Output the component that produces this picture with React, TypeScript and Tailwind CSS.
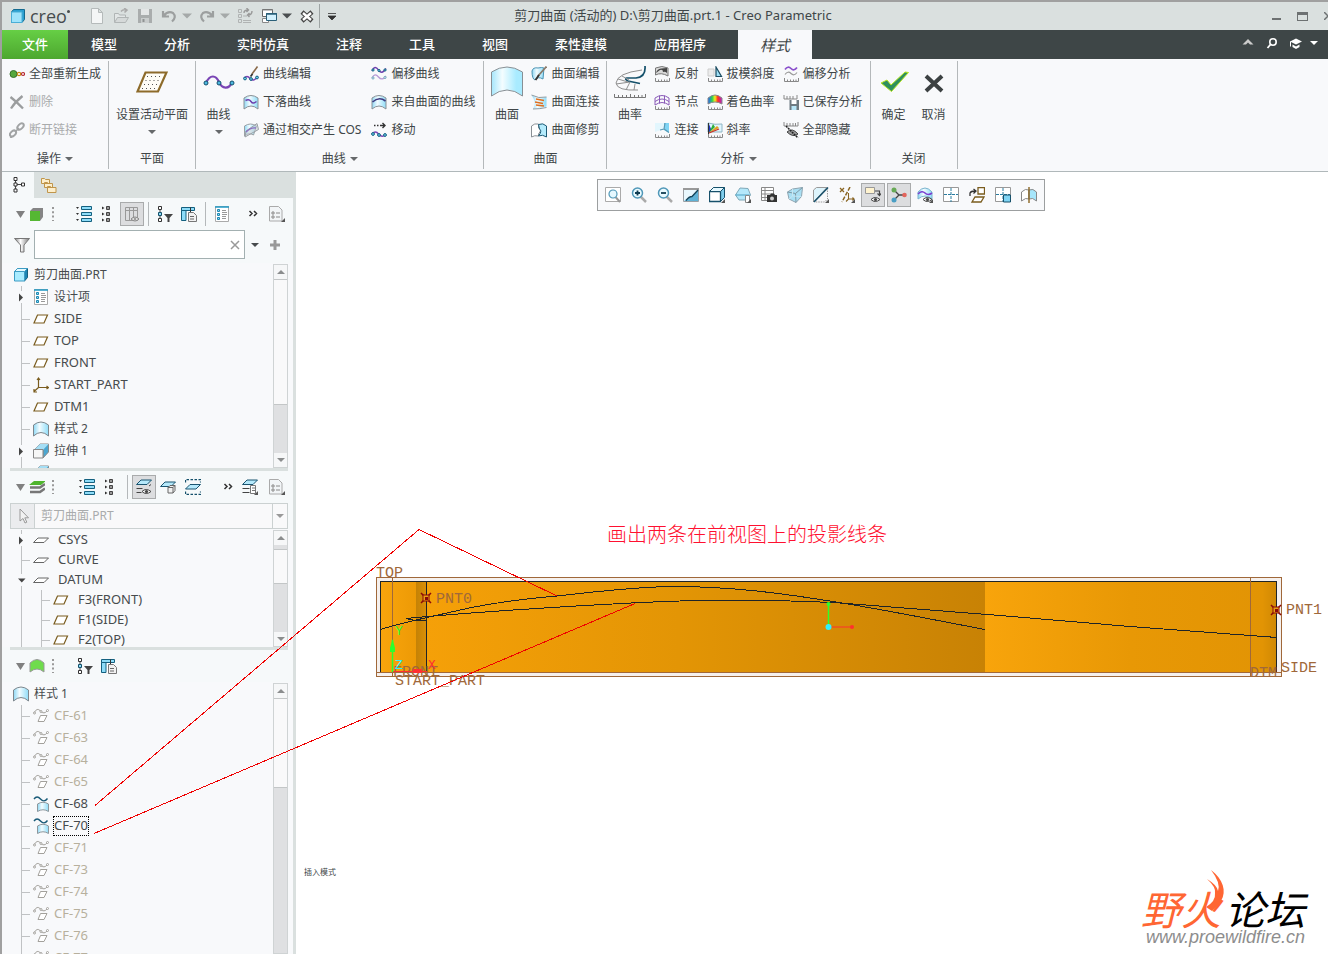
import type { ReactNode } from 'react';
import { clsx } from 'clsx';

/* ----- icons (16x16 unless noted) ----- */

const ruler = <path d="M1.5 12v3.5h14V12M4.5 13.5v2M7.5 13.5v2M10.5 13.5v2M13 13.5v2" fill="none" stroke="#888" />;
const wave = 'M1 5C3 .5 5 .5 7.500 4S12 7 15 2.5';
const sheetArc = 'M1 4Q8-1 15 4V15Q8 9 1 15Z';
const magnifier = (
  <>
    <path d="M9.5 9.5l5.500 5.500" stroke="#aaa" strokeWidth="2.5" />
    <circle cx="6.5" cy="6" r="5" fill="#eafaff" stroke="#4f97b8" strokeWidth="1.5" />
  </>
);
const eye = (
  <>
    <path d="M6 12.5q4-4 9 0q-5 4-9 0Z" fill="#fff" stroke="#444" />
    <circle cx="10.5" cy="12.5" r="1.6" fill="#444" />
  </>
);
const corner = <path d="M16 12v4h-4z" fill="#555" />;

const ICONS = {
  creo: (
    <>
      <path d="M1.5 4l2-2.500h11v10l-2.500 3h-10.500z" fill="#2b9fd0" stroke="#156a8f" />
      <path d="M1.5 4h10.500v10.500h-10.500z" fill="#9fe3fb" stroke="#4aaed6" />
    </>
  ),
  newFile: <path d="M2.5.5h7l4 4v11h-11zM9.5.5v4h4" fill="#f4f6f6" stroke="#b5baba" />,
  open: (
    <>
      <path d="M1.5 14V5.500h4l1 1.500h6v2" fill="#e2e6e6" stroke="#b0b5b5" />
      <path d="M1.5 14.500l3-5h11l-3 5z" fill="#d5d9d9" stroke="#b0b5b5" />
      <path d="M8 3.5q2-2.500 5-1.500M11 0l3 2-2.500 2.500" fill="none" stroke="#aaa" strokeWidth="1.5" />
    </>
  ),
  save: (
    <>
      <path d="M1 1h14v14H1z" fill="#a9adad" />
      <path d="M4 1h8v6H4z" fill="#e3e6e6" />
      <path d="M4 10h8v5H4z" fill="#c9cdcd" />
      <path d="M5.5 11h2v3h-2z" fill="#8f9393" />
    </>
  ),
  undo: <path d="M2 3v5.500h6M2.500 8Q7 2.500 12 5q4 4-1 8.500" fill="none" stroke="#9c9f9f" strokeWidth="2.2" />,
  redo: <path d="M14 3v5.500H8M13.500 8Q9 2.500 4 5q-4 4 1 8.500" fill="none" stroke="#9c9f9f" strokeWidth="2.2" />,
  regenList: (
    <>
      <path d="M1.5 1.500h3v3h-3zM1.500 6.500h3v3h-3zM1.500 11.500h3v3h-3z" fill="none" stroke="#b0b3b3" />
      <path d="M6 8h4M6 12.500h8M6 14.500h8" stroke="#b0b3b3" />
      <path d="M7 5q0-3 4-3M9.500 0l2 2-2 2M15 3q0 4-4 4M12.500 5l-2 2 2 2" fill="none" stroke="#999" strokeWidth="1.4" />
    </>
  ),
  windows: (
    <>
      <path d="M1.5 1.500h10v7h-10z" fill="#fff" stroke="#666" />
      <path d="M1.5 10.500h6v4h-6zM1 2h11" fill="#fff" stroke="#888" />
      <path d="M5.5 5.500h10v7h-10z" fill="#d4f1fd" stroke="#2a5f78" />
      <path d="M5 6h11" stroke="#2a5f78" strokeWidth="1.5" />
    </>
  ),
  closeWin: (
    <>
      <path d="M3 4l10 9M13 4L3 13" stroke="#444" strokeWidth="4.5" />
      <path d="M4 5l8 7M12 5l-8 7" stroke="#fff" strokeWidth="2.4" />
    </>
  ),
  quickMenu: <path d="M4 5.500h8M4 8h8l-4 4z" fill="#333" stroke="#333" strokeWidth=".8" />,
  regen: (
    <>
      <circle cx="4.5" cy="8" r="3.5" fill="#55a83c" stroke="#35702a" />
      <circle cx="10" cy="8" r="1.7" fill="#fff" stroke="#c68a12" strokeWidth="1.2" />
      <circle cx="14" cy="8" r="1.5" fill="#fff" stroke="#b4242f" strokeWidth="1.2" />
    </>
  ),
  remove: <path d="M1.5 3Q8 8 14 14.500M13.500 2Q6 8 2 14.500" fill="none" stroke="#9b9d9e" strokeWidth="2.3" />,
  unlink: (
    <>
      <ellipse cx="11.5" cy="4.5" rx="3.8" ry="2.3" transform="rotate(-45 11.5 4.5)" fill="none" stroke="#a2a4a5" strokeWidth="2" />
      <ellipse cx="4" cy="11.5" rx="3.5" ry="2.3" transform="rotate(-45 4 11.5)" fill="none" stroke="#a2a4a5" strokeWidth="2" />
      <path d="M10 6l-4 4M3 15.500l-2 .5" stroke="#a2a4a5" strokeWidth="1.5" />
    </>
  ),
  curveEdit: (
    <>
      <path d="M1 12.500q3-4 6 0t8-2" fill="none" stroke="#7a45b5" strokeWidth="1.5" />
      <path d="M9 8L14.500 .5" stroke="#8a6a4a" strokeWidth="1.6" />
      <path d="M7.5 10.500l2-2.500" stroke="#333" strokeWidth="1.8" />
      <circle cx="2" cy="12.500" r="1.400" fill="#6fd0f2" stroke="#14607f" />
      <circle cx="8" cy="13" r="1.400" fill="#6fd0f2" stroke="#14607f" />
      <circle cx="14" cy="11.500" r="1.400" fill="#6fd0f2" stroke="#14607f" />
    </>
  ),
  dropCurve: (
    <>
      <path d={sheetArc} fill="url(#sky)" stroke="#8a9095" />
      <path d="M2.5 6.500q3.500-2 5.500 1t5.500 0" fill="none" stroke="#6c3fae" strokeWidth="1.5" />
    </>
  ),
  intersect: (
    <>
      <path d="M1.5 4q6-4 12 0l-3 9q-5-3-9 1z" fill="url(#sky)" stroke="#9aa0a5" />
      <path d="M2 15L15.500 7.500 14 1.500 3 9z" fill="#c7ccd0" fillOpacity=".5" stroke="#9aa0a5" />
      <path d="M3 10q5-5 10-4" fill="none" stroke="#8a6fc0" strokeWidth="1.3" />
    </>
  ),
  offsetCurve: (
    <>
      <path d={wave} fill="none" stroke="#6c3fae" strokeWidth="1.4" />
      <path d="M1 12C3 8 5 8 7.500 11s5 2.500 7.500-1" fill="none" stroke="#b79ad6" strokeWidth="1.3" />
      <circle cx="2" cy="4" r="1.100" fill="#6fd0f2" stroke="#14607f" />
      <circle cx="8" cy="4.500" r="1.100" fill="#6fd0f2" stroke="#14607f" />
      <circle cx="14" cy="4" r="1.100" fill="#6fd0f2" stroke="#14607f" />
      <circle cx="2" cy="12" r="1.100" fill="#d0ecf8" stroke="#7aa9bd" />
      <circle cx="14" cy="11.500" r="1.100" fill="#d0ecf8" stroke="#7aa9bd" />
    </>
  ),
  curveFromSurf: (
    <>
      <path d={sheetArc} fill="url(#sky)" stroke="#8a9095" />
      <path d="M1.5 8q6.500-6 13-1" fill="none" stroke="#3e3a80" strokeWidth="1.6" />
    </>
  ),
  move: (
    <>
      <path d="M3 3.500h1.500M6 3.500h1.500M9 3.500h5M11.500 1l2.500 2.500-2.500 2.500" fill="none" stroke="#333" strokeWidth="1.4" />
      <path d="M1 12q3.500-4 6.500 0t7.500 1" fill="none" stroke="#7a45b5" strokeWidth="1.4" />
      <circle cx="2" cy="12" r="1.400" fill="#6fd0f2" stroke="#14607f" />
      <circle cx="8" cy="13" r="1.400" fill="#6fd0f2" stroke="#14607f" />
      <circle cx="14" cy="13" r="1.400" fill="#6fd0f2" stroke="#14607f" />
    </>
  ),
  surfEdit: (
    <>
      <path d="M1 5q1-4 6-3 4-1 6 0l-1 11q-5-3-8 1-3-1-3-9z" fill="url(#sky)" stroke="#4b93b3" />
      <path d="M7 10L15.500 .5" stroke="#8a7a6a" strokeWidth="1.8" />
      <path d="M4.5 14l3.500-5" stroke="#333" strokeWidth="2" />
    </>
  ),
  surfConnect: (
    <>
      <path d="M.5 1q7 4 15 2v9.500q-7 2-13.500 2.500 4-6-1.500-14z" fill="url(#sky)" />
      <path d="M.5 1q7 4 15 2M2 15q7 0 13.500-1.500" fill="none" stroke="#909aa0" />
      <path d="M5 5l8 1.500M4 8l8 1.500M5 11l8 1" stroke="#e07020" strokeWidth="1.4" />
    </>
  ),
  surfTrim: (
    <>
      <path d="M.5 4q3-3 7-2v4q4 1 0 6v2q-4-1-7 1z" fill="#fff" stroke="#8a9095" />
      <path d="M7.5 2.500Q12 .5 15.500 4v11q-4-3-8-1 4-5 1-7z" fill="#b4ebfc" stroke="#1d5a75" />
    </>
  ),
  reflect: (
    <>
      <path d="M1.500 2Q8-1 14 2v8Q7 6 1.500 9z" fill="#d8d8d8" stroke="#777" />
      <path d="M2 7Q3 3 7 2.500L13 2v5Q11 5 9 6q0-3-3-2z" fill="#444" />
      {ruler}
    </>
  ),
  nodes: (
    <>
      <path d="M1 4q7-5 14 0M1 7.500q7-5 14 0M1 11q7-5 14 0M1 4v7M5.500 1.500v8M10.500 1.500v8M15 4v7" fill="none" stroke="#8a5bb8" />
      {ruler}
    </>
  ),
  connection: (
    <>
      <path d="M1 1h9v6l-9 3z" fill="#e2f6fd" />
      <path d="M10 1h5v10l-5-3z" fill="#7fd4f4" />
      <path d="M6 8l4-1 1-6M10 7l5 3.500" fill="none" stroke="#5a9ab5" strokeWidth="1.2" />
      {ruler}
    </>
  ),
  draft: (
    <>
      <path d="M1 3h6v7H1z" fill="#ececec" stroke="#ccc" />
      <path d="M9 1l5.500 9.500H9z" fill="#9fe0f7" stroke="#1a4a60" strokeWidth="1.2" />
      {ruler}
    </>
  ),
  shadeCurv: (
    <>
      <path d="M1 4q7-6 14 0v6Q8 6 1 10z" fill="url(#rainbow)" stroke="#888" />
      {ruler}
    </>
  ),
  slope: (
    <>
      <path d="M1 1q7 2 14 1v8H1z" fill="#dff5fd" stroke="#8fb6c6" />
      <path d="M1.5 11V1l3 7z" fill="#2038c8" />
      <path d="M2 11L6 2l2 3z" fill="#2fae3a" />
      <path d="M2 11l8-7 2 2z" fill="#e0a020" />
      <path d="M2 11l10-4" stroke="#c8302a" strokeWidth="1.3" />
      <path d="M1.5 1v11" stroke="#333" />
      {ruler}
    </>
  ),
  offsetAnalysis: (
    <>
      <path d="M2 3.500q3-4 6-1t6-1" fill="none" stroke="#8a4fcc" strokeWidth="1.7" />
      <path d="M2 8.500q3-4 6-1t6-1" fill="none" stroke="#9a9a9a" strokeWidth="1.2" />
      {ruler}
    </>
  ),
  savedAnalysis: (
    <>
      <path d="M1 1v4h13V1M4 2v3M7 2v3M10 2v3" fill="none" stroke="#888" />
      <path d="M6.5 6h9.500v10H6.500z" fill="#6f7b82" />
      <path d="M8.5 6h5v4h-5z" fill="#fff" />
      <path d="M8.5 12h5v4h-5z" fill="#b9e7f8" />
    </>
  ),
  hideAll: (
    <>
      <path d="M1 0v4h14V0M4 1v3M7 1v3M10 1v3M12.500 1v3" fill="none" stroke="#888" />
      <path d="M4 10q5-5 11 2-5 4-11-2z" fill="#999" stroke="#444" />
      <path d="M3 4l12 12" stroke="#222" strokeWidth="1.5" strokeDasharray="2 .8" />
    </>
  ),
  modelTree: (
    <>
      <path d="M3.5 4v8M4 7.500h7" stroke="#444" />
      <path d="M2 .5h3v3H2zM2 6h3v3H2zM2 12h3v3H2zM9.500 6h3v3h-3z" fill="#fff" stroke="#333" />
    </>
  ),
  folders: (
    <path d="M.5 1.500h3l1 1h4v4h-8zM3.500 5.500h3l1 1h4v4h-8zM6.500 9.500h3l1 1h4.500v5H6.500z" fill="#fdeecb" stroke="#c0954a" />
  ),
  triangle: <path d="M4 5h9L8.500 12z" fill="#808080" />,
  greenCube: (
    <>
      <path d="M1 5l3-3h10v9l-3 4z" fill="#858585" />
      <path d="M1 5h10v10H1z" fill="#55b733" />
    </>
  ),
  greenLayers: (
    <>
      <path d="M5 2h12l-5 4H0z" fill="#4fb52e" />
      <path d="M1 8.500h10l5-3.500M1 13h10l5-3.500" fill="none" stroke="#777" strokeWidth="2.5" />
    </>
  ),
  greenSurf: <path d="M1 5q7-7 14 0v9Q8 8 1 14z" fill="#6fdc4c" stroke="#999" />,
  dots: <path d="M3 1v14" stroke="#999" strokeWidth="2" strokeDasharray="2 2.300" />,
  expandAll: (
    <>
      <path d="M0 1h3L1.500 3zM0 7h3L1.500 9zM0 13h3L1.500 15z" fill="#333" />
      <path d="M5.5 .5h10v3h-10zM5.500 6.500h10v3h-10zM5.500 12.500h10v3h-10z" fill="#8ddcf8" stroke="#14607f" />
    </>
  ),
  collapseAll: (
    <>
      <path d="M4 .5v3L6.500 2zM4 6.500v3L6.500 8zM4 12.500v3l2.500-1.500z" fill="#333" />
      <path d="M8.5 .5h3v3h-3zM8.500 6.500h3v3h-3zM8.500 12.500h3v3h-3z" fill="#999" stroke="#444" />
    </>
  ),
  columnsEye: (
    <>
      <path d="M1.5 1.500h12v13h-12zM1.500 4.500h12M5.500 1.500v13M9.500 1.500v13" fill="none" stroke="#999" />
      <path d="M7 13q4-4 8 0-4 4-8 0z" fill="#ddd" stroke="#888" />
      <circle cx="11" cy="13" r="1" fill="#888" />
    </>
  ),
  treeFilter: (
    <>
      <path d="M3 3v10" stroke="#444" />
      <path d="M1.5 .5h3v3h-3zM1.500 12.500h3v3h-3z" fill="#fff" stroke="#333" />
      <path d="M1.5 6.500h3v3h-3z" fill="#8ddcf8" stroke="#14506b" />
      <path d="M7 8h9l-3.500 4v4h-2v-4z" fill="#444" />
    </>
  ),
  treeColumns: (
    <>
      <path d="M1 1.500h13v13H1z" fill="#fff" />
      <path d="M.5 1.500h13v3H.5zM.5 4.500h4.500v10H.5z" fill="#8ddcf8" stroke="#14607f" />
      <path d="M9.5 1.500V7" stroke="#333" />
      <path d="M7.5 6.500h5l3 3v6h-8z" fill="#f2f2f2" stroke="#777" />
      <path d="M9 10.500h4M9 13h4" stroke="#666" />
    </>
  ),
  sheet: (
    <>
      <path d="M1.5 .5h13v15h-13z" fill="#fff" stroke="#aaa" />
      <path d="M1 1h14" stroke="#1f9ac6" strokeWidth="1.5" />
      <path d="M3.5 3.500h2v2h-2zM3.500 7.500h2v2h-2zM3.500 11.500h2v2h-2z" fill="#8ddcf8" stroke="#1c87b0" />
      <path d="M8 4.500h4M8 6.500h5M8 8.500h5M8 10.500h4M8 12.500h4" stroke="#999" />
    </>
  ),
  more: <path d="M3.5 5l2.500 2.500L3.500 10M8 5l2.500 2.500L8 10" fill="none" stroke="#333" strokeWidth="1.5" />,
  doc: (
    <>
      <path d="M.5 .5h9l3.500 3.500v11H.5z" fill="#f2f5f7" stroke="#aaa" />
      <path d="M3 6h2v2H3zM3 10h2v2H3z" fill="#fff" stroke="#888" />
      <path d="M7 7h4M7 11h4" stroke="#888" />
      {corner}
    </>
  ),
  funnel: <path d="M.5 1.500h15L10 8v7H6.500V8z" fill="url(#steel)" stroke="#777" />,
  part: (
    <>
      <path d="M1.5 4.500l3-3h10v9l-3 3.500z" fill="#1e86b4" stroke="#15607f" />
      <path d="M1.5 4.500h10V14h-10z" fill="#a9ecff" stroke="#3d9cc4" />
      <path d="M1.5 4.500l3-3h10l-3 3z" fill="#e5faff" stroke="#3d9cc4" />
    </>
  ),
  plane: <path d="M4.5 4h10L11 12H1z" fill="#fff" stroke="#7a5c1e" strokeWidth="1.2" />,
  csys: <path d="M5.5 1v9.500h10M5.500 10.500l-4.500 4M4 3l1.500-2L7 3M13.500 9l2 1.500-2 1.500M1 12v3h3" fill="none" stroke="#7a5c1e" strokeWidth="1.2" />,
  style: <path d="M.5 4Q8-2 15.500 4v11Q8 8 .5 15z" fill="url(#sky)" stroke="#7d868c" />,
  extrude: (
    <>
      <path d="M1 7L7 1h8.500v8L10 15V7z" fill="#4ba6d0" stroke="#8a8a8a" />
      <path d="M1 7l6-6h8.500L10 7z" fill="#a5def5" />
      <path d="M.5 6.500H10V15H.5z" fill="#f6f6f6" stroke="#888" />
    </>
  ),
  layer: <path d="M5 6h10.500L11 10.500H.5z" fill="#fff" stroke="#666" />,
  layerEye: (
    <>
      <path d="M5 1h10.500L11 5.500H.5z" fill="#b5e9fb" stroke="#1b5470" />
      <path d="M.5 9.500h6M.5 13.500h5M13 7l2-1.500" stroke="#444" />
      {eye}
    </>
  ),
  layerCube: (
    <>
      <path d="M5 3h10.500L11 7.500H.5z" fill="#b5e9fb" stroke="#1b5470" />
      <path d="M8 8.500l2-2h5v5l-2 2.500H8zM8 8.500h5V14M13 8.500l2-2" fill="#f1f1f1" stroke="#666" />
    </>
  ),
  layerFrame: (
    <>
      <path d="M.5 3.500v-3h15v3M.5 12.500v3h15v-3" fill="none" stroke="#14506b" strokeDasharray="2.5 1.500" strokeWidth="1.3" />
      <path d="M5 5.500h10.500L11 10H.5z" fill="#b5e9fb" stroke="#1b5470" />
    </>
  ),
  layerDoc: (
    <>
      <path d="M5 1h10.500L11 5.500H.5z" fill="#b5e9fb" stroke="#1b5470" />
      <path d="M.5 9.500h7M.5 13.500h7" stroke="#444" />
      <path d="M8.5 6.500h5v8h-5zM10 9h3M10 11.500h3" fill="#fff" stroke="#777" />
      {corner}
    </>
  ),
  cursor: <path d="M5 1v12l3-2.500 2 4.500 1.800-.8-2-4.400h3.700z" fill="#f2f2f2" stroke="#999" />,
  cfOff: (
    <>
      <path d="M1 5Q4-1 7.500 3t7-.5" fill="none" stroke="#a3a19c" />
      <path d="M7.5 7.500h6.500L11 13.500H5z" fill="#fff" stroke="#a3a19c" />
      <circle cx="1.5" cy="5" r="1" fill="#fff" stroke="#a3a19c" />
      <circle cx="8" cy="3.500" r="1" fill="#fff" stroke="#a3a19c" />
      <circle cx="14.500" cy="2.500" r="1" fill="#fff" stroke="#a3a19c" />
    </>
  ),
  cfOn: (
    <>
      <path d="M1 3Q4-1 7.500 3t7-.5" fill="none" stroke="#185a78" strokeWidth="1.4" />
      <path d="M4.5 8q5.500-3.500 11 0v7.500q-5.500-3.500-11 0z" fill="url(#sky)" stroke="#8d969c" />
    </>
  ),
  refit: (
    <>
      <path d="M.5 .5h15v14H.5z" fill="#fff" stroke="#aaa" />
      <path d="M10.5 10l4.500 5" stroke="#999" strokeWidth="2" />
      <circle cx="8" cy="7" r="4" fill="#e5f8ff" stroke="#4f97b8" strokeWidth="1.2" />
    </>
  ),
  zoomIn: (
    <>
      {magnifier}
      <path d="M4 6h5M6.500 3.500v5" stroke="#0f3c52" strokeWidth="1.8" />
    </>
  ),
  zoomOut: (
    <>
      {magnifier}
      <path d="M4 6h5" stroke="#0f3c52" strokeWidth="1.8" />
    </>
  ),
  repaint: (
    <>
      <path d="M.5 1.500h15v13H.5z" fill="#e9f8fe" stroke="#9aa0a5" />
      <path d="M0 2h16" stroke="#999" strokeWidth="2" />
      <path d="M1 14l8-5 6-6v11z" fill="#5fb2d6" />
      <path d="M3 13.500q3-4 6-4l6-6.500" fill="none" stroke="#14445a" strokeWidth="1.3" />
    </>
  ),
  shading: (
    <>
      <path d="M.5 4.500l4-4h11v10l-4 4z" fill="#7fcdec" stroke="#17506b" />
      <path d="M.5 4.500h11v10H.5z" fill="#fff" stroke="#17506b" strokeWidth="1.3" />
      <path d="M.5 4.500l4-4h11l-4 4z" fill="#e6f9ff" stroke="#17506b" />
      {corner}
    </>
  ),
  orient: (
    <>
      <path d="M.5 8L5 1l8 .5L15.500 8 12 13H4z" fill="#b4e8fa" stroke="#7fa8b8" />
      <path d="M.5 8h14" stroke="#4b9fc2" />
      <path d="M10.5 8.500h4v7h-4z" fill="#fff" stroke="#888" />
      {corner}
    </>
  ),
  viewMgr: (
    <>
      <path d="M.5 .5h12v13H.5zM.5 3.500h12M.5 7h12M.5 10.500h12M4 .5v13" fill="#fff" stroke="#888" />
      <path d="M6 8h3l1-1.500h3L14 8h2v7H6z" fill="#333" />
      <circle cx="11" cy="11.500" r="2" fill="#ccc" />
    </>
  ),
  perspective: (
    <>
      <path d="M.5 5l5-3 10-1.500-1 9L9 15.500 2 12z" fill="#a9dff3" stroke="#8ea4b0" />
      <path d="M.5 5l8 1.500 7-6M8.500 6.500l.5 9" fill="none" stroke="#7e98a4" />
      <path d="M5.5 2v7l9 .5M5.500 9L2 12" fill="none" stroke="#c7e6f2" />
    </>
  ),
  section: (
    <>
      <path d="M.5 15V3l3-2.500H14z" fill="#ddf4fc" stroke="#999" />
      <path d="M14.5 1v11l-3 3H2" fill="none" stroke="#999" strokeDasharray="1.5 1" />
      <path d="M1 15L15 .5" stroke="#17506b" strokeWidth="1.5" />
      {corner}
    </>
  ),
  datums: (
    <>
      <path d="M1 1l4 4M5 1L1 5" stroke="#8a6522" strokeWidth="1.3" />
      <path d="M11 0L3 15" stroke="#8a6522" strokeWidth="1.5" strokeDasharray="4 1.500" />
      <path d="M9.5 6v6h5.500M9.500 12L7 14.500M13.500 10.500L15 12l-1.500 1.500" fill="none" stroke="#8a6522" strokeWidth="1.1" />
      {corner}
    </>
  ),
  annoEye: (
    <>
      <path d="M.5 .5h9v6h-9z" fill="#fff3cf" stroke="#999" />
      <path d="M10 4h4.500v4M12.500 6.500l2 2 1.500-2" fill="none" stroke="#444" strokeWidth="1.2" />
      {eye}
    </>
  ),
  spin: (
    <>
      <path d="M3 3l5 5h6M8 8l-5 5" fill="none" stroke="#444" strokeWidth="1.3" />
      <circle cx="3" cy="3" r="2.5" fill="#67a955" />
      <circle cx="3" cy="13" r="2.5" fill="#4a9ec4" />
      <circle cx="13.500" cy="8" r="2.3" fill="#e3655c" />
    </>
  ),
  curvDisplay: (
    <>
      <path d="M1 5q7-8 14 0v7q-7-6-14 0z" fill="url(#sky)" stroke="#7bb3cd" />
      <path d="M1 7q4-4 7-1t7 0" fill="none" stroke="#7a3fd0" strokeWidth="1.6" />
      {eye}
      {corner}
    </>
  ),
  fourViews: (
    <>
      <path d="M.5 .5h15v14H.5z" fill="#fff" stroke="#999" />
      <path d="M8 1v14M1 7.500h14" stroke="#2a7ca0" strokeDasharray="3 1" />
    </>
  ),
  planeRotate: (
    <>
      <path d="M9 .5h6.500V7H9zM6 10h9l-3 5H3z" fill="#fff" stroke="#7a5c1e" strokeWidth="1.3" />
      <path d="M1 9V6q1-2 5-2M4.500 2L7 4 4.500 6.500" fill="none" stroke="#333" strokeWidth="1.3" />
    </>
  ),
  activeView: (
    <>
      <path d="M.5 .5h15v14H.5z" fill="#fff" stroke="#999" />
      <path d="M8 1v14M1 7.500h14" stroke="#2a7ca0" strokeDasharray="3 1" />
      <path d="M8.5 8h7v7h-7z" fill="#7fd4f4" stroke="#17506b" />
    </>
  ),
  symmetry: (
    <>
      <path d="M.5 5q4-4 7.500-2v9q-3-2-7.500 2z" fill="#fff" stroke="#888" />
      <path d="M8 3q4-2 7.500 2v9q-4-4-7.500-2z" fill="#a6e6fb" stroke="#888" />
      <path d="M8 0v16" stroke="#8a6522" strokeWidth="1.4" />
    </>
  ),
  caret: <path d="M4 6h8l-4 4z" fill="currentColor" />,
};

type IconName = keyof typeof ICONS;

function Icon({ name, className = 'size-4' }: { name: IconName; className?: string }) {
  return (
    <svg viewBox="0 0 16 16" className={clsx('shrink-0', className)} aria-hidden="true">
      {ICONS[name]}
    </svg>
  );
}

/* large ribbon icons, 32x32 */
const BIG_ICONS = {
  activePlane: (
    <>
      <path d="M9.5 6.500h21L22 25.500H1.500z" fill="#fffdf6" stroke="#8d6b2a" strokeWidth="2.2" />
      <path d="M11 10.500h16M9.500 14.500h16M8 18.500h16M6 22.500h16" stroke="#555" strokeDasharray="1 3" />
    </>
  ),
  curve: (
    <>
      <path d="M3 17C7 8 13 9 16 16s10 8 13 0" fill="none" stroke="#7a45b5" strokeWidth="2.2" />
      <circle cx="3" cy="17" r="2" fill="#4db8e0" stroke="#14506b" />
      <circle cx="16" cy="17" r="2" fill="#4db8e0" stroke="#14506b" />
      <circle cx="29" cy="17" r="2" fill="#4db8e0" stroke="#14506b" />
    </>
  ),
  surface: <path d="M.5 6Q16-4 31.500 6v24Q16 18 .5 30z" fill="url(#skyBig)" stroke="#888f94" />,
  curvature: (
    <>
      <path d="M31 0q1 11-9 12H13q-3 1 1 3l12 2.500" fill="none" stroke="#14506b" strokeWidth="1.7" />
      <path d="M28 4Q3 7 2 17q1 8 22 7M8 10l7 4M4 13l10 3M2 18l14-2M12 24l4-8M20 24l1-6" fill="none" stroke="#8f8f8f" />
      <path d="M.5 28v3.500h31V28M4.500 29v2M8.500 29v2M12.500 29v2M16.500 28v3M20.500 29v2M24.500 29v2M28 29v2" fill="none" stroke="#777" />
    </>
  ),
  ok: <path d="M3 17l6-3 4 5L27 6l3.500.5-17 19z" fill="#2f8f5e" stroke="#b5e61d" />,
  cancel: <path d="M8 10l16 15M24 10L8 25" stroke="#3c4142" strokeWidth="4" />,
};

/* ----- title bar and menu tabs ----- */

function QuickButton({ icon, label, caret }: { icon: IconName; label: string; caret?: 'on' | 'off' }) {
  return (
    <button type="button" aria-label={label} className="flex items-center">
      <Icon name={icon} />
      {caret && <Icon name="caret" className={clsx('size-5', caret === 'on' ? 'text-[#4a4e50]' : 'text-[#a5a9a9]')} />}
    </button>
  );
}

function TitleBar() {
  return (
    <header className="grid h-7 shrink-0 grid-cols-[1fr_auto_1fr] items-center bg-[#dae0df] text-[#404648]">
      <div className="flex items-center pl-2">
        <Icon name="creo" />
        <span className="ml-1 flex w-11 font-['Open_Sans',sans-serif] text-lg leading-5 text-[#474c4e]">
          creo
          <span className="mt-1 size-[3px] rounded-full bg-[#474c4e]" />
        </span>
        <div className="ml-[15px] flex items-center gap-2">
          <QuickButton icon="newFile" label="新建" />
          <QuickButton icon="open" label="打开" />
          <QuickButton icon="save" label="保存" />
          <div className="flex items-center gap-0.5">
            <QuickButton icon="undo" label="撤消" caret="off" />
            <QuickButton icon="redo" label="重做" caret="off" />
            <QuickButton icon="regenList" label="重新生成" />
          </div>
          <div className="flex items-center gap-0.5">
            <QuickButton icon="windows" label="窗口" caret="on" />
            <QuickButton icon="closeWin" label="关闭窗口" />
          </div>
        </div>
        <div className="ml-1 flex h-6 items-center border-l border-[#9ea4a4] pl-1">
          <QuickButton icon="quickMenu" label="自定义快速访问工具栏" />
        </div>
      </div>
      <h1 className="pl-4 text-[13px]">剪刀曲面 (活动的) D:\剪刀曲面.prt.1 - Creo Parametric</h1>
      <div className="flex items-center justify-end gap-4 overflow-hidden">
        <button type="button" aria-label="最小化" className="h-2 w-[9px] border-b-2 border-[#6d7172]" />
        <button type="button" aria-label="最大化" className="h-[9px] w-[11px] border border-t-[3px] border-[#6d7172]" />
        <button type="button" aria-label="关闭" className="-mr-1 flex">
          <svg viewBox="0 0 8 8" className="size-2 text-[#6d7172]">
            <path d="M0 0l8 8M8 0L0 8" stroke="currentColor" strokeWidth="1.5" />
          </svg>
        </button>
      </div>
    </header>
  );
}

const MENU = ['模型', '分析', '实时仿真', '注释', '工具', '视图', '柔性建模', '应用程序'];

function MenuBar() {
  return (
    <nav className="flex h-[29px] shrink-0 bg-[#3e4647] text-[13px] font-medium text-white">
      <button type="button" className="w-[66px] bg-linear-to-b from-[#66cf45] to-[#4da72f]">
        文件
      </button>
      <div className="flex gap-px">
        {MENU.map((m) => (
          <button key={m} type="button" className="px-[23px]">
            {m}
          </button>
        ))}
      </div>
      <button type="button" className="ml-[9px] w-[74px] bg-[#f8f9fb] text-[15px] font-normal text-[#404648] italic">
        样式
      </button>
      <div className="ml-auto flex items-center gap-2 pr-1.5 pb-1">
        <button type="button" aria-label="最小化功能区">
          <svg viewBox="0 0 16 16" className="size-4">
            <path d="M2.5 9.500L8 4l5.500 5.500h-3.500L8 7.500 6 9.500z" fill="#ccc" />
          </svg>
        </button>
        <button type="button" aria-label="搜索">
          <svg viewBox="0 0 16 16" className="size-4">
            <circle cx="9" cy="7" r="3.2" fill="none" stroke="#fff" strokeWidth="1.6" />
            <path d="M6.5 9.500L3.500 13" stroke="#fff" strokeWidth="1.8" />
          </svg>
        </button>
        <button type="button" aria-label="学习" className="flex gap-0.5">
          <svg viewBox="0 0 16 16" className="size-4">
            <path d="M2 6.500l6-3 6 3-6 3zM4.500 9.500V12L8 14l3.500-2V9.500L8 11.500z" fill="#fff" />
            <path d="M2.5 6.500v5" stroke="#fff" />
          </svg>
          <Icon name="caret" />
        </button>
      </div>
    </nav>
  );
}

/* ----- ribbon ----- */

type Command = [icon: IconName, label: string, disabled?: boolean];

function CommandColumn({ items }: { items: Command[] }) {
  return (
    <div className="flex flex-col pt-px">
      {items.map(([icon, label, disabled]) => (
        <button
          key={label}
          type="button"
          disabled={disabled}
          className={clsx('flex h-7 items-center gap-1 whitespace-nowrap', disabled && 'text-[#a9abac]')}
        >
          <Icon name={icon} />
          {label}
        </button>
      ))}
    </div>
  );
}

function BigButton({
  icon,
  label,
  caret,
  className = 'w-11',
}: {
  icon: keyof typeof BIG_ICONS;
  label: string;
  caret?: boolean;
  className?: string;
}) {
  return (
    <button type="button" className={clsx('flex flex-col items-center whitespace-nowrap', className)}>
      <svg viewBox="0 0 32 32" className="mt-[7px] mb-2 size-8" aria-hidden="true">
        {BIG_ICONS[icon]}
      </svg>
      <span className="leading-[18px]">{label}</span>
      {caret && <Icon name="caret" className="size-4 text-[#66696b]" />}
    </button>
  );
}

function RibbonGroup({
  label,
  menu,
  className,
  children,
}: {
  label: string;
  menu?: boolean;
  className?: string;
  children: ReactNode;
}) {
  return (
    <section className="my-0.5 flex flex-col border-r border-[#b4b8ba]">
      <div className={clsx('-mt-0.5 flex h-[85px] shrink-0', className)}>{children}</div>
      <div className="flex flex-1 items-center justify-center pt-1">
        {label}
        {menu && <Icon name="caret" className="-mr-1 size-4 text-[#66696b]" />}
      </div>
    </section>
  );
}

function Ribbon() {
  return (
    <div className="flex h-[113px] shrink-0 overflow-hidden border-b border-[#b0b8ba] bg-[#f8f9fb]">
      <RibbonGroup label="操作" menu className="px-[7px]">
        <CommandColumn
          items={[
            ['regen', '全部重新生成'],
            ['remove', '删除', true],
            ['unlink', '断开链接', true],
          ]}
        />
      </RibbonGroup>
      <RibbonGroup label="平面" className="px-[7px]">
        <BigButton icon="activePlane" label="设置活动平面" caret className="w-[72px]" />
      </RibbonGroup>
      <RibbonGroup label="曲线" menu className="gap-2.5 pr-2">
        <BigButton icon="curve" label="曲线" caret className="-mr-2 w-[45px]" />
        <CommandColumn
          items={[
            ['curveEdit', '曲线编辑'],
            ['dropCurve', '下落曲线'],
            ['intersect', '通过相交产生 COS'],
          ]}
        />
        <CommandColumn
          items={[
            ['offsetCurve', '偏移曲线'],
            ['curveFromSurf', '来自曲面的曲线'],
            ['move', '移动'],
          ]}
        />
      </RibbonGroup>
      <RibbonGroup label="曲面" className="gap-0.5 pr-[7px]">
        <BigButton icon="surface" label="曲面" className="w-[45px]" />
        <CommandColumn
          items={[
            ['surfEdit', '曲面编辑'],
            ['surfConnect', '曲面连接'],
            ['surfTrim', '曲面修剪'],
          ]}
        />
      </RibbonGroup>
      <RibbonGroup label="分析" menu className="gap-2 pr-[7px]">
        <BigButton icon="curvature" label="曲率" className="-mr-1.5 w-[45px]" />
        <CommandColumn
          items={[
            ['reflect', '反射'],
            ['nodes', '节点'],
            ['connection', '连接'],
          ]}
        />
        <CommandColumn
          items={[
            ['draft', '拔模斜度'],
            ['shadeCurv', '着色曲率'],
            ['slope', '斜率'],
          ]}
        />
        <CommandColumn
          items={[
            ['offsetAnalysis', '偏移分析'],
            ['savedAnalysis', '已保存分析'],
            ['hideAll', '全部隐藏'],
          ]}
        />
      </RibbonGroup>
      <RibbonGroup label="关闭" className="px-[3px]">
        <BigButton icon="ok" label="确定" className="w-10" />
        <BigButton icon="cancel" label="取消" className="w-10" />
      </RibbonGroup>
    </div>
  );
}

/* ----- side panels ----- */

function ToolButton({ icon, label, on }: { icon: IconName; label: string; on?: boolean }) {
  return (
    <button
      type="button"
      aria-label={label}
      className={clsx('flex shrink-0 items-center justify-center', on ? 'size-6 border border-[#a9abac] bg-[#dcdddf]' : 'h-6 w-4')}
    >
      <Icon name={icon} />
    </button>
  );
}

function Separator() {
  return <span className="h-6 w-px bg-[#b4b8ba]" />;
}

function PanelHandle({ icon }: { icon: IconName }) {
  return (
    <div className="flex w-16 items-center gap-px">
      <ToolButton icon="triangle" label="折叠" />
      <Icon name={icon} />
      <Icon name="dots" className="ml-1 size-4" />
    </div>
  );
}

/** Static scroll bar: arrows, a track and a thumb of the given class. */
function ScrollBar({ thumb, bottom = true }: { thumb: string; bottom?: boolean }) {
  return (
    <div className="mt-px mr-[5px] flex w-[15px] shrink-0 flex-col border border-[#cfd3d4] bg-[#dfe0e2]">
      <div className="flex h-3.5 shrink-0 items-center justify-center bg-[#f6f7f8]">
        <svg viewBox="0 0 8 4" className="h-1 w-2">
          <path d="M0 4h8L4 0z" fill="#8b8d8e" />
        </svg>
      </div>
      <div className={clsx('border-y border-[#c3c6c7] bg-[#f9f9fa]', thumb)} />
      {bottom && (
        <div className="mt-auto flex h-3.5 shrink-0 items-center justify-center bg-[#f6f7f8]">
          <svg viewBox="0 0 8 4" className="h-1 w-2">
            <path d="M0 0h8L4 4z" fill="#8b8d8e" />
          </svg>
        </div>
      )}
    </div>
  );
}

type Twist = 'none' | 'closed' | 'open' | 'through';

function Branch({ twist }: { twist: Twist }) {
  return (
    <svg viewBox="0 0 16 22" className="mr-[3px] h-full w-4 shrink-0" preserveAspectRatio="xMidYMid slice" aria-hidden="true">
      <path d={twist === 'closed' || twist === 'open' ? 'M7.5 0v5M7.5 17v5' : 'M7.5 0v22'} stroke="#c0c2c4" />
      {twist === 'none' && <path d="M8 11.500h8" stroke="#c0c2c4" />}
      {twist === 'closed' && <path d="M5 7.500l4 4-4 4z" fill="#444" />}
      {twist === 'open' && <path d="M4 9.500h7.500l-3.750 4z" fill="#444" />}
    </svg>
  );
}

interface Node {
  icon: IconName;
  label: string;
  twist?: Twist;
  muted?: boolean;
  focused?: boolean;
  deep?: boolean;
}

const MODEL_NODES: Node[] = [
  { icon: 'sheet', label: '设计项', twist: 'closed' },
  { icon: 'plane', label: 'SIDE' },
  { icon: 'plane', label: 'TOP' },
  { icon: 'plane', label: 'FRONT' },
  { icon: 'csys', label: 'START_PART' },
  { icon: 'plane', label: 'DTM1' },
  { icon: 'style', label: '样式 2' },
  { icon: 'extrude', label: '拉伸 1', twist: 'closed' },
  { icon: 'extrude', label: '' },
];

const LAYER_NODES: Node[] = [
  { icon: 'layer', label: 'CSYS', twist: 'closed' },
  { icon: 'layer', label: 'CURVE' },
  { icon: 'layer', label: 'DATUM', twist: 'open' },
  { icon: 'plane', label: 'F3(FRONT)', deep: true },
  { icon: 'plane', label: 'F1(SIDE)', deep: true },
  { icon: 'plane', label: 'F2(TOP)', deep: true },
];

const ACTIVE_CURVES = [68, 70];
const STYLE_NODES: Node[] = [61, 63, 64, 65, 68, 70, 71, 73, 74, 75, 76, 77].map((n) => ({
  icon: ACTIVE_CURVES.includes(n) ? 'cfOn' : 'cfOff',
  label: `CF-${n}`,
  muted: !ACTIVE_CURVES.includes(n),
  focused: n === 70,
}));

function TreeRoot({ icon, label }: { icon: IconName; label: string }) {
  return (
    <div className="flex h-[22px] items-center gap-[5px] pl-[11px] text-xs">
      <Icon name={icon} />
      {label}
    </div>
  );
}

function Tree({ nodes, row, gap }: { nodes: Node[]; row: string; gap: string }) {
  return (
    <ul>
      {nodes.map((n) => (
        <li key={n.label} className={clsx('flex items-center pl-3', row)}>
          {n.deep && (
            <>
              <Branch twist="through" />
              <span className="w-px" />
            </>
          )}
          <Branch twist={n.twist ?? 'none'} />
          <Icon name={n.icon} />
          <span
            className={clsx(
              gap,
              /[一-龥]/.test(n.label) ? 'text-xs' : 'text-[13px]',
              n.muted && 'text-[#b7b09d]',
              n.focused && 'outline-1 outline-black outline-dotted',
            )}
          >
            {n.label}
          </span>
        </li>
      ))}
    </ul>
  );
}

function Sidebar() {
  return (
    <aside className="flex w-[294px] shrink-0 flex-col border-r-[3px] border-[#dae0df] bg-[#f6f9fa] text-[#474b4d]">
      <div className="flex h-[26px] shrink-0 bg-[#dae0df]">
        <button type="button" aria-label="模型树" className="flex w-8 items-center justify-center bg-[#f6f9fa] pl-1">
          <Icon name="modelTree" />
        </button>
        <button type="button" aria-label="文件夹浏览器" className="flex w-[30px] items-center justify-center">
          <Icon name="folders" />
        </button>
      </div>

      <div className="flex h-8 shrink-0 items-center gap-1.5 pl-2.5">
        <PanelHandle icon="greenCube" />
        <div className="-ml-1.5 flex items-center gap-1.5">
          <ToolButton icon="expandAll" label="全部展开" />
          <ToolButton icon="collapseAll" label="全部折叠" />
          <ToolButton icon="columnsEye" label="树列显示" on />
        </div>
        <div className="-ml-0.5 flex items-center gap-2">
          <Separator />
          <ToolButton icon="treeFilter" label="树过滤器" />
          <ToolButton icon="treeColumns" label="树列" />
          <Separator />
          <ToolButton icon="sheet" label="设计项" />
        </div>
        <div className="mr-2 ml-auto flex items-center gap-[7px]">
          <ToolButton icon="more" label="更多" />
          <ToolButton icon="doc" label="设置" />
        </div>
      </div>
      <div className="flex h-[29px] shrink-0 items-center pl-3">
        <Icon name="funnel" />
        <div className="ml-1 flex h-[29px] w-[211px] items-center border border-[#a3b0b1] bg-white pr-1">
          <input aria-label="筛选" className="min-w-0 flex-1 px-1 text-xs outline-none" />
          <button type="button" aria-label="清除">
            <svg viewBox="0 0 10 10" className="size-2.5">
              <path d="M1 1l8 8M9 1L1 9" stroke="#999" strokeWidth="1.5" />
            </svg>
          </button>
        </div>
        <Icon name="caret" className="ml-0.5 size-4" />
        <button type="button" aria-label="添加" className="ml-1.5">
          <svg viewBox="0 0 12 12" className="size-3">
            <path d="M6 1v10M1 6h10" stroke="#999" strokeWidth="3" />
          </svg>
        </button>
      </div>
      <div className="mt-1 flex h-[205px] shrink-0 bg-[#f8f9fb]">
        <div className="flex-1 overflow-hidden pt-px">
          <TreeRoot icon="part" label="剪刀曲面.PRT" />
          <Tree nodes={MODEL_NODES} row="h-[22px]" gap="ml-[5px]" />
        </div>
        <ScrollBar thumb="h-[126px]" />
      </div>
      <div className="mr-[5px] ml-2 h-[3px] shrink-0 bg-[#dae0df]" />

      <div className="flex h-8 shrink-0 items-center gap-1.5 pl-2.5">
        <PanelHandle icon="greenLayers" />
        <div className="-ml-[3px] flex items-center gap-1.5">
          <ToolButton icon="expandAll" label="全部展开" />
          <ToolButton icon="collapseAll" label="全部折叠" />
        </div>
        <div className="ml-1 flex items-center gap-1">
          <Separator />
          <ToolButton icon="layerEye" label="显示层" on />
          <ToolButton icon="layerCube" label="层项" />
          <span className="w-px" />
          <ToolButton icon="layerFrame" label="隔离层" />
        </div>
        <div className="mr-2 ml-auto flex items-center gap-[11px]">
          <div className="flex gap-[5px]">
            <ToolButton icon="more" label="更多" />
            <ToolButton icon="layerDoc" label="层设置" />
          </div>
          <ToolButton icon="doc" label="设置" />
        </div>
      </div>
      <div className="mr-[5px] ml-2 flex h-[26px] shrink-0 border border-[#cbd1d1] text-xs text-[#a9abac]">
        <button type="button" aria-label="选择" className="flex w-[23px] items-center justify-center bg-[#ebecee]">
          <Icon name="cursor" />
        </button>
        <select aria-label="活动模型" disabled className="flex-1 appearance-none border-x border-[#cbd1d1] bg-[#f9f9fa] pl-1.5 opacity-100">
          <option>剪刀曲面.PRT</option>
        </select>
        <span className="flex w-[14px] items-center justify-center bg-[#f9f9fa]">
          <svg viewBox="0 0 8 4" className="h-1 w-2">
            <path d="M0 0h8L4 4z" fill="#999" />
          </svg>
        </span>
      </div>
      <div className="flex h-[118px] shrink-0 bg-[#f8f9fb]">
        <div className="flex-1 overflow-hidden pt-px">
          <Tree nodes={LAYER_NODES} row="h-5" gap="ml-[9px]" />
        </div>
        <ScrollBar thumb="mt-1 h-[35px]" />
      </div>
      <div className="mr-[5px] ml-2 h-[3px] shrink-0 bg-[#dae0df]" />

      <div className="flex h-8 shrink-0 items-center gap-2 pl-2.5">
        <PanelHandle icon="greenSurf" />
        <div className="-ml-[7px] flex items-center gap-2">
          <ToolButton icon="treeFilter" label="树过滤器" />
          <ToolButton icon="treeColumns" label="树列" />
        </div>
      </div>
      <div className="flex min-h-0 flex-1 bg-[#f8f9fb]">
        <div className="flex-1 overflow-hidden pt-px">
          <TreeRoot icon="style" label="样式 1" />
          <Tree nodes={STYLE_NODES} row="h-[22px]" gap="ml-[5px]" />
        </div>
        <ScrollBar thumb="h-[90px]" bottom={false} />
      </div>
    </aside>
  );
}

/* ----- graphics area ----- */

const VIEW_TOOLS: [icon: IconName, label: string, on?: boolean][] = [
  ['refit', '重新调整'],
  ['zoomIn', '放大'],
  ['zoomOut', '缩小'],
  ['repaint', '重画'],
  ['shading', '显示样式'],
  ['orient', '已保存方向'],
  ['viewMgr', '视图管理器'],
  ['perspective', '透视图'],
  ['section', '截面'],
  ['datums', '基准显示过滤器'],
  ['annoEye', '注释显示', true],
  ['spin', '旋转中心', true],
  ['curvDisplay', '曲面显示'],
  ['fourViews', '显示所有视图'],
  ['planeRotate', '活动平面方向'],
  ['activeView', '下一个视图'],
  ['symmetry', '对称'],
];

function PointMark({ x, y }: { x: number; y: number }) {
  return (
    <g transform={`translate(${x} ${y})`}>
      <path d="M-5-5l10 10M5-5l-10 10" stroke="#8b0a0a" strokeWidth="1.5" />
      <path d="M-3-3h6v6h-6z" fill="#e8a010" stroke="#8b0a0a" />
      <path d="M-1-1h3v3h-3z" fill="#8b0a0a" />
    </g>
  );
}

// The view box is in window coordinates, so the callouts and the model share them.
function ModelView() {
  return (
    <svg
      viewBox="296 172 1032 782"
      className="absolute top-0 left-0 h-[782px] w-[1032px] font-['Liberation_Mono',monospace] text-[15px]"
      role="img"
      aria-label="剪刀曲面"
    >
      <g shapeRendering="crispEdges">
        <path d="M376.5 577.500h905v99h-905z" fill="#f5f0ed" stroke="#a0683a" />
        <path d="M380 581h36v91h-36z" fill="url(#bodyLeft)" />
        <path d="M416 581h11v91h-11z" fill="url(#bodyNotch)" />
        <path d="M427 581h558v91H427z" fill="url(#bodyMid)" />
        <path d="M985 581h292v91H985z" fill="url(#bodyRight)" />
        <path d="M380.5 672v-90.500h896V672M426.500 581v91" fill="none" stroke="#1e2428" />
        <path d="M376 672.500h905M392.500 577v99M1250.500 577v99" stroke="#a0683a" />
        <path
          d="M380.5 629.500C400 623 430 617 460 610Q500 601 557 596C600 591 640 586.500 675 586.500 730 586.500 780 593 833 601.500S940 621 985 629.500"
          fill="none"
          stroke="#1e2428"
        />
        <path
          d="M427 620.500h-12L406 618.500 427 616.500Q530 608 640 602.500C690 600 740 599.500 790 601Q830 602 853 604L1000 615.500 1130 626.500 1277 637.500"
          fill="none"
          stroke="#1e2428"
        />
      </g>

      <g fill="#a0683a">
        <text x="376" y="577">TOP</text>
        <text x="436" y="603">PNT0</text>
        <text x="393" y="676">FRONT</text>
        <text x="395" y="685">START_PART</text>
        <text x="1286" y="614">PNT1</text>
        <text x="1281" y="672">SIDE</text>
        <text x="1250" y="677">DTM</text>
      </g>
      <PointMark x={426} y={598} />
      <PointMark x={1276} y={610} />

      <path d="M393 671.500h34" stroke="#ff3030" />
      <path d="M413 669h9v4h-9z" fill="#ff3030" />
      <path d="M392.5 672v-32" stroke="#2cff2c" strokeWidth="1.5" />
      <path d="M392.5 639l2.500 9v4h-5v-4z" fill="#2cff2c" />
      <g className="text-[13px]">
        <text x="395" y="635" fill="#2cff2c">Y</text>
        <text x="395" y="669" fill="#30f0ff">Z</text>
        <text x="428" y="669" fill="#ff3030">X</text>
      </g>

      <path d="M828.5 627v-23" stroke="#2cff2c" strokeWidth="1.5" />
      <path d="M829 627h23" stroke="#ff3030" />
      <circle cx="828.5" cy="604" r="2" fill="#2cff2c" />
      <circle cx="852" cy="627" r="2" fill="#ff3030" />
      <circle cx="828.5" cy="627" r="3" fill="#30f0ff" />
    </svg>
  );
}

function Watermark() {
  return (
    <div className="absolute right-[23px] bottom-[7px] text-right font-['Noto_Sans_CJK_SC',sans-serif]">
      <div className="relative flex items-end text-[40px] leading-[38px] italic">
        <span className="text-[#ff6633]">野火</span>
        <span className="ml-1 text-black">论坛</span>
        <svg viewBox="0 0 24 44" className="absolute -top-5 left-[62px] h-11 w-6" aria-hidden="true">
          <path d="M8 1C20 10 24 22 18 32q-4 6-9 10l-6-4q10-6 9-14 1-6-8-14 10 6 11 12Q18 14 8 1z" fill="#ff6633" />
        </svg>
      </div>
      <div className="font-['Liberation_Sans',sans-serif] text-lg leading-5 text-[#8d8d8d] italic">www.proewildfire.cn</div>
    </div>
  );
}

function GraphicsArea() {
  return (
    <main className="relative flex min-w-0 flex-1 flex-col items-center overflow-hidden bg-white">
      <ModelView />
      <div className="relative mt-[7px] ml-[18px] flex items-center gap-0.5 border border-[#9c9fa0] bg-[#f8f9fb] p-[3px]">
        {VIEW_TOOLS.map(([icon, label, on]) => (
          <button
            key={icon}
            type="button"
            aria-label={label}
            className={clsx('flex size-6 items-center justify-center', on && 'border border-[#a9abac] bg-[#dcdddf]')}
          >
            <Icon name={icon} />
          </button>
        ))}
      </div>
      <p className="absolute top-[348px] left-[311px] font-['Liberation_Serif','Noto_Sans_CJK_SC',serif] text-xl leading-[30px] font-light text-[#ff1030]">
        画出两条在前视图上的投影线条
      </p>
      <p className="absolute top-[694px] left-2 text-[8px] leading-3 text-[#404648]">插入模式</p>
      <Watermark />
    </main>
  );
}

/** Gradients shared by the icons, plus the red callout lines over both panes. */
function Callouts() {
  return (
    <svg className="pointer-events-none absolute -top-0.5 -left-0.5 h-full w-full overflow-visible" aria-hidden="true">
      <defs>
        <linearGradient id="sky">
          <stop offset="0" stopColor="#8fd8f4" />
          <stop offset=".4" stopColor="#f2fcff" />
          <stop offset="1" stopColor="#8fdcf8" />
        </linearGradient>
        <linearGradient id="skyBig">
          <stop offset="0" stopColor="#a5e6fb" />
          <stop offset=".35" stopColor="#f4fdff" />
          <stop offset=".8" stopColor="#a9ebff" />
        </linearGradient>
        <linearGradient id="steel">
          <stop offset="0" stopColor="#777" />
          <stop offset=".4" stopColor="#fff" />
          <stop offset="1" stopColor="#777" />
        </linearGradient>
        <linearGradient id="rainbow">
          <stop offset="0" stopColor="#2060ff" />
          <stop offset=".3" stopColor="#30d050" />
          <stop offset=".5" stopColor="#f5ee20" />
          <stop offset=".7" stopColor="#ff3020" />
          <stop offset="1" stopColor="#b020d0" />
        </linearGradient>
        <linearGradient id="bodyLeft">
          <stop offset="0" stopColor="#f9a50c" />
          <stop offset="1" stopColor="#ed9a06" />
        </linearGradient>
        <linearGradient id="bodyNotch">
          <stop offset="0" stopColor="#c48206" />
          <stop offset="1" stopColor="#dc9006" />
        </linearGradient>
        <linearGradient id="bodyMid">
          <stop offset="0" stopColor="#f5a008" />
          <stop offset=".45" stopColor="#e39505" />
          <stop offset="1" stopColor="#c88205" />
        </linearGradient>
        <linearGradient id="bodyRight">
          <stop offset="0" stopColor="#f8a40b" />
          <stop offset=".5" stopColor="#e89805" />
          <stop offset=".95" stopColor="#e29404" />
          <stop offset="1" stopColor="#cf8804" />
        </linearGradient>
      </defs>
      <g fill="none" stroke="#f00000" shapeRendering="crispEdges">
        <path d="M95 805.500L419 529.500 557 596" />
        <path d="M94 833.500L635 603.500" />
      </g>
    </svg>
  );
}

export default function App() {
  return (
    <div className="relative flex h-screen flex-col overflow-hidden border-t-2 border-l-2 border-[#a0a0a0] bg-white font-['Noto_Sans','Noto_Sans_CJK_SC',sans-serif] text-xs text-[#404648]">
      <TitleBar />
      <MenuBar />
      <Ribbon />
      <div className="flex min-h-0 flex-1">
        <Sidebar />
        <GraphicsArea />
      </div>
      <Callouts />
    </div>
  );
}
